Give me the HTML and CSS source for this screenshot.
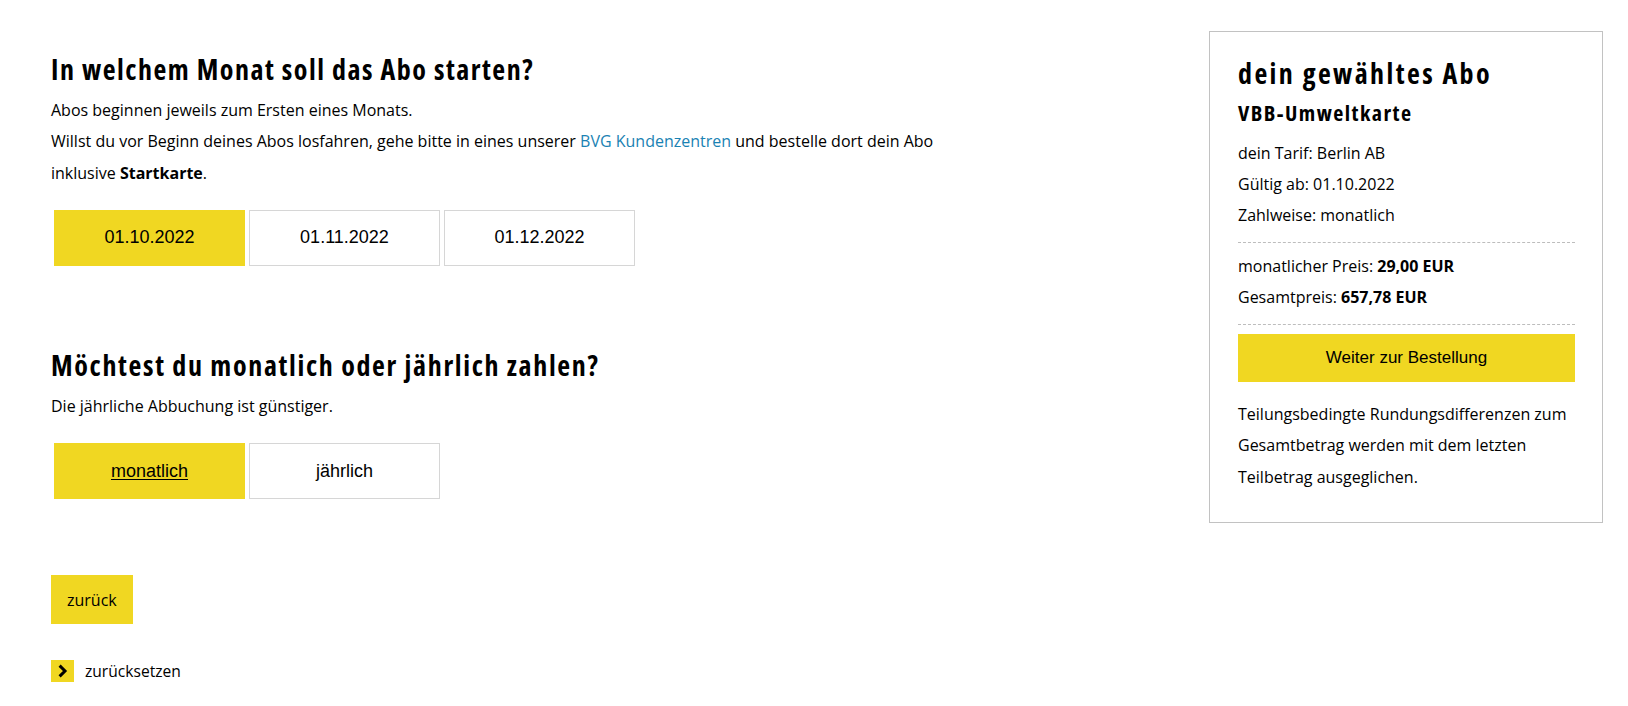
FILE: index.html
```html
<!DOCTYPE html>
<html lang="de">
<head>
<meta charset="utf-8">
<title>Abo-Start wählen</title>
<link rel="stylesheet" href="styles.css">
</head>
<body>
<div class="page">
  <main class="content">
    <section class="step">
      <h2 class="step-title">In welchem Monat soll das Abo starten?</h2>
      <p class="step-text">Abos beginnen jeweils zum Ersten eines Monats.<br>Willst du vor Beginn deines Abos losfahren, gehe bitte in eines unserer <a class="text-link" href="#">BVG Kundenzentren</a> und bestelle dort dein Abo inklusive <strong>Startkarte</strong>.</p>
      <div class="options">
        <button class="option is-selected" type="button">01.10.2022</button>
        <button class="option" type="button">01.11.2022</button>
        <button class="option" type="button">01.12.2022</button>
      </div>
    </section>

    <section class="step step-second">
      <h2 class="step-title">Möchtest du monatlich oder jährlich zahlen?</h2>
      <p class="step-text">Die jährliche Abbuchung ist günstiger.</p>
      <div class="options">
        <button class="option is-selected" type="button"><span class="underline">monatlich</span></button>
        <button class="option" type="button">jährlich</button>
      </div>
    </section>

    <div class="actions">
      <button class="btn-back" type="button">zurück</button>
      <a class="reset-link" href="#">
        <svg class="reset-icon" width="23" height="22" viewBox="0 0 23 22" aria-hidden="true">
          <rect width="23" height="22" fill="#f0d722"/>
          <polyline points="8.6,5.6 14,11 8.6,16.4" fill="none" stroke="#000" stroke-width="3" stroke-linejoin="miter"/>
        </svg>
        <span>zurücksetzen</span>
      </a>
    </div>
  </main>

  <aside class="summary">
    <h2 class="summary-title">dein gewähltes Abo</h2>
    <h3 class="summary-product">VBB-Umweltkarte</h3>
    <div class="summary-block summary-details">
      <p>dein Tarif: Berlin AB</p>
      <p>Gültig ab: 01.10.2022</p>
      <p>Zahlweise: monatlich</p>
    </div>
    <div class="summary-block summary-prices">
      <p>monatlicher Preis: <strong>29,00 EUR</strong></p>
      <p>Gesamtpreis: <strong>657,78 EUR</strong></p>
    </div>
    <button class="btn-order" type="button">Weiter zur Bestellung</button>
    <p class="summary-note">Teilungsbedingte Rundungsdifferenzen zum Gesamtbetrag werden mit dem letzten Teilbetrag ausgeglichen.</p>
  </aside>
</div>
</body>
</html>
```
FILE: styles.css
```css
* { box-sizing: border-box; }

html, body {
  margin: 0;
  padding: 0;
  background: #fff;
  color: #000;
  font-family: "Open Sans", "Noto Sans", sans-serif;
  font-size: 16px;
}

.page {
  display: flex;
  align-items: flex-start;
}

.content {
  flex: 1;
  padding: 52px 0 0 51px;
}

.step-title {
  margin: 0;
  font-size: 28px;
  line-height: 34px;
  font-weight: 700;
  font-stretch: condensed;
  letter-spacing: 1.5px;
}

.step-second .step-title { letter-spacing: 1.65px; }

.step-text {
  margin: 9px 0 0;
  max-width: 900px;
  line-height: 31.3px;
}

.text-link {
  color: #1a82b3;
  text-decoration: none;
}

.step-text strong { font-weight: 700; }

.options {
  display: flex;
  gap: 4px;
  margin-top: 21px;
  padding-left: 3px;
}

.option {
  width: 191px;
  height: 56px;
  margin: 0;
  padding: 0;
  border: 1px solid #d6d6d6;
  background: #fff;
  color: #000;
  font-family: "Liberation Sans", Arial, sans-serif;
  font-size: 18px;
  cursor: pointer;
}

.option.is-selected {
  background: #f0d722;
  border-color: #f0d722;
}

.underline { text-decoration: underline; text-underline-offset: 2px; }

.step-second { margin-top: 82px; }
.step-second .step-text { margin-top: 9.5px; }
.step-second .options { margin-top: 20.5px; }

.actions {
  margin-top: 76px;
  display: flex;
  flex-direction: column;
  align-items: flex-start;
  gap: 36px;
}

.btn-back {
  height: 49px;
  padding: 0 16px;
  border: 0;
  background: #f0d722;
  color: #000;
  font-family: "Open Sans", sans-serif;
  font-size: 16px;
  cursor: pointer;
}

.reset-link {
  display: flex;
  align-items: center;
  gap: 11px;
  color: #000;
  text-decoration: none;
  font-size: 15.6px;
  line-height: 22px;
}

.reset-icon { display: block; flex: none; }

.summary {
  flex: none;
  width: 394px;
  margin: 31px 25px 0 0;
  padding: 24px 27px 29px 28px;
  border: 1px solid #c2c2c2;
}

.summary-title {
  margin: 0;
  font-size: 28px;
  line-height: 34px;
  font-weight: 700;
  font-stretch: condensed;
  letter-spacing: 2.4px;
}

.summary-product {
  margin: 7px 0 0;
  font-size: 22px;
  line-height: 30px;
  font-weight: 700;
  font-stretch: condensed;
  letter-spacing: 1.45px;
}

.summary p {
  margin: 0;
  line-height: 31.3px;
}

.summary-block {
  border-bottom: 1px dashed #bdbdbd;
}

.summary-details {
  margin-top: 10.5px;
  padding-bottom: 11px;
}

.summary-prices {
  padding: 7.5px 0 11px;
}

.summary strong { font-weight: 700; }

.btn-order {
  display: block;
  width: 100%;
  height: 48px;
  margin-top: 9px;
  border: 0;
  background: #f0d722;
  color: #000;
  font-family: "Liberation Sans", Arial, sans-serif;
  font-size: 17px;
  cursor: pointer;
}

.summary .summary-note {
  margin-top: 16.5px;
}
```
